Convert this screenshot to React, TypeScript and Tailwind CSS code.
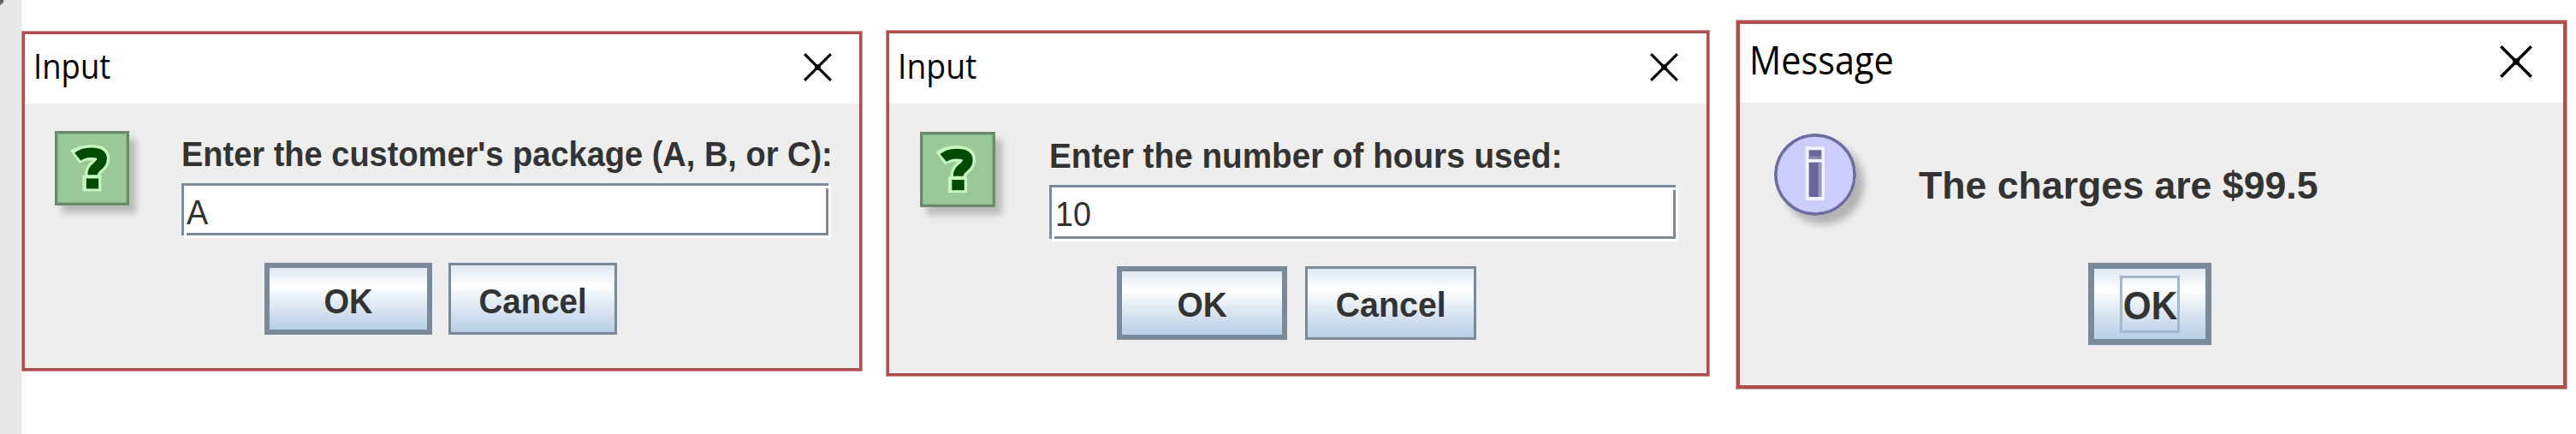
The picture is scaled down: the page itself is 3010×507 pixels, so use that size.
import React from 'react';

interface WindowProps {
  title: string;
  frameClass: string;
  titleBarClass: string;
  titleClass: string;
  closeClass: string;
  children: React.ReactNode;
}

const CloseIcon = ({ className }: { className: string }) => (
  <svg viewBox="0 0 10 10" className={className}>
    <path d="M0.350 0.350L9.650 9.650M9.650 0.350L0.350 9.650" stroke="#000" strokeWidth="0.95" />
    <rect x="4" y="4" width="2" height="2" fill="#000" />
  </svg>
);

const QuestionIcon = ({ className }: { className: string }) => (
  <svg viewBox="0 0 262 262" className={className}>
    <rect x="5" y="5" width="252" height="252" fill="#99c999" stroke="#6a8a6a" strokeWidth="10" />
    <g fill="none" strokeLinejoin="round">
      <path d="M71 92 C88 80 106 76 126 76 C152 76 166 82 166 98 C166 112 158 118 147 127 Q132 138 132 162" stroke="#c6f7c3" strokeWidth="55" />
      <rect x="98" y="156" width="66" height="56" fill="#c6f7c3" stroke="none" />
      <path d="M81 91 C94 80 108 76 126 76 C152 76 166 82 166 98 C166 112 158 118 147 127 Q133 138 133 154" stroke="#004b00" strokeWidth="35" />
      <rect x="111" y="167" width="43" height="36" fill="#004b00" stroke="none" />
    </g>
  </svg>
);

const InfoIcon = ({ className }: { className: string }) => (
  <svg viewBox="0 0 288 288" className={className}>
    <circle cx="144" cy="144" r="138.500" fill="#ccccff" stroke="#6f6c9f" strokeWidth="11" />
    <rect x="110" y="46" width="67" height="188" fill="#f3f3ff" />
    <rect x="122" y="58" width="44" height="32" fill="#666699" />
    <rect x="122" y="101" width="44" height="121" fill="#666699" />
    <rect x="155" y="101" width="11" height="121" fill="#9997c6" />
    <rect x="122" y="80" width="44" height="10" fill="#8d8cb8" />
  </svg>
);

const DialogWindow = ({ title, frameClass, titleBarClass, titleClass, closeClass, children }: WindowProps) => (
  <section className={`shrink-0 border-[#b04e4e] bg-[#eeeeee] ${frameClass}`}>
    <header className={`flex justify-between bg-white ${titleBarClass}`}>
      <h2 className={`origin-left whitespace-nowrap font-['Open_Sans',sans-serif] text-black ${titleClass}`}>{title}</h2>
      <button type="button" className={`block ${closeClass}`}>
        <CloseIcon className="block size-full" />
      </button>
    </header>
    {children}
  </section>
);

const buttonFill = 'bg-[linear-gradient(to_bottom,#dde8f3_0%,#ffffff_30%,#dce7f2_62%,#b8cfe5_100%)]';

const MetalButton = ({ className, children }: { className: string; children: React.ReactNode }) => (
  <button type="button" className={`flex items-center justify-center border-[#7a8a99] font-bold ${buttonFill} ${className}`}>
    {children}
  </button>
);

// Flush bevel: the white copy sits one step down and right of the grey line
const MetalField = ({ value, className }: { value: string; className: string }) => (
  <div className={`relative border-3 border-[#7a8a99] bg-white shadow-[3px_3px_0_#ffffff] ${className}`}>
    <span className="inline-block origin-left scale-x-[0.92]">{value}</span>
    <i className="absolute -bottom-[3px] left-0 h-[3px] w-[3px] bg-white" />
    <i className="absolute -right-[3px] top-0 h-[3px] w-[3px] bg-white" />
  </div>
);

export default function App() {
  return (
    <main className="flex h-[507px] w-[3010px] items-start overflow-hidden bg-white font-['Liberation_Sans',Arial,sans-serif] text-[#333333]">
      <aside className="h-full w-[25px] shrink-0 bg-[#e8e8e8]">
        <svg viewBox="0 0 5 7" className="block h-[7px] w-[5px]">
          <path d="M0 0H4L4.500 2L0 6.500Z" fill="#666" />
        </svg>
      </aside>

      <DialogWindow
        title="Input"
        frameClass="mt-[37px] ml-px h-[396px] w-[981px] border-3 shadow-[0_0_0_1px_#c99391]"
        titleBarClass="h-[81px] pl-[10px] pr-[32px]"
        titleClass="text-[41px] leading-[72px] scale-x-[0.89]"
        closeClass="mt-[22px] size-[33px]"
      >
        <div className="flex pl-[35px]">
          <QuestionIcon className="mt-8 block size-[87px] shrink-0 shadow-[8px_9px_8px_rgba(0,0,0,0.22)]" />
          <div className="ml-[61px] pt-[35px]">
            <p className="h-12 w-[756px] origin-left scale-x-[0.95] whitespace-nowrap text-[40px] font-bold leading-[48px]">
              Enter the customer's package (A, B, or C):
            </p>
            <MetalField value="A" className="mt-[10px] h-[61px] w-[756px] pl-[3px] text-[41px] leading-[62px]" />
          </div>
        </div>
        <div className="mt-8 flex gap-[19px] pl-[280px]">
          <MetalButton className="h-[84px] w-[196px] border-6 pt-[5px] text-[40px]">
            <span className="scale-x-[0.95]">OK</span>
          </MetalButton>
          <MetalButton className="h-[84px] w-[197px] border-3 pt-[5px] text-[40px]">
            <span className="scale-x-[0.96]">Cancel</span>
          </MetalButton>
        </div>
      </DialogWindow>

      <DialogWindow
        title="Input"
        frameClass="mt-[36px] ml-[29px] h-[403px] w-[961px] border-3 shadow-[0_0_0_1px_#c99391]"
        titleBarClass="h-[82px] pl-[10px] pr-[33px]"
        titleClass="text-[41px] leading-[74px] scale-x-[0.91]"
        closeClass="mt-[23px] size-[33px]"
      >
        <div className="flex pl-[36px]">
          <QuestionIcon className="mt-[33px] block size-[88px] shrink-0 shadow-[8px_9px_8px_rgba(0,0,0,0.22)]" />
          <div className="ml-[63px] pt-[37px]">
            <p className="h-12 w-[732px] origin-left scale-x-[0.967] whitespace-nowrap text-[40px] font-bold leading-[48px]">
              Enter the number of hours used:
            </p>
            <MetalField value="10" className="mt-[10px] h-[63px] w-[732px] pl-[4px] text-[41px] leading-[62px]" />
          </div>
        </div>
        <div className="mt-[32px] flex gap-[21px] pl-[266px]">
          <MetalButton className="h-[86px] w-[199px] border-6 pt-[5px] text-[41px]">
            <span className="scale-x-[0.95]">OK</span>
          </MetalButton>
          <MetalButton className="h-[86px] w-[200px] border-3 pt-[5px] text-[41px]">
            <span className="scale-x-[0.96]">Cancel</span>
          </MetalButton>
        </div>
      </DialogWindow>

      <DialogWindow
        title="Message"
        frameClass="mt-[24px] ml-[32px] h-[430px] w-[970px] border-4 shadow-[0_0_0_1px_#c9aaa8]"
        titleBarClass="h-[92px] pl-[11px] pr-[36px]"
        titleClass="text-[46px] leading-[83px] scale-x-[0.9]"
        closeClass="mt-[25px] size-[38px]"
      >
        <div className="flex pl-[40px]">
          <InfoIcon className="mt-[36px] block size-[96px] shrink-0 rounded-full shadow-[9px_10px_9px_rgba(0,0,0,0.25)]" />
          <p className="ml-[73px] mt-[69px] h-[56px] origin-left scale-x-[0.992] whitespace-nowrap text-[45px] font-bold leading-[56px]">
            The charges are $99.5
          </p>
        </div>
        <div className="flex pl-[407px] pt-[55px]">
          <MetalButton className="h-[96px] w-[144px] border-7 text-[46px]">
            <span className="flex h-[67px] w-[70px] items-center justify-center border-3 border-[#a3b8cc] pt-[5px]">
              <span className="scale-x-[0.92]">OK</span>
            </span>
          </MetalButton>
        </div>
      </DialogWindow>
    </main>
  );
}
